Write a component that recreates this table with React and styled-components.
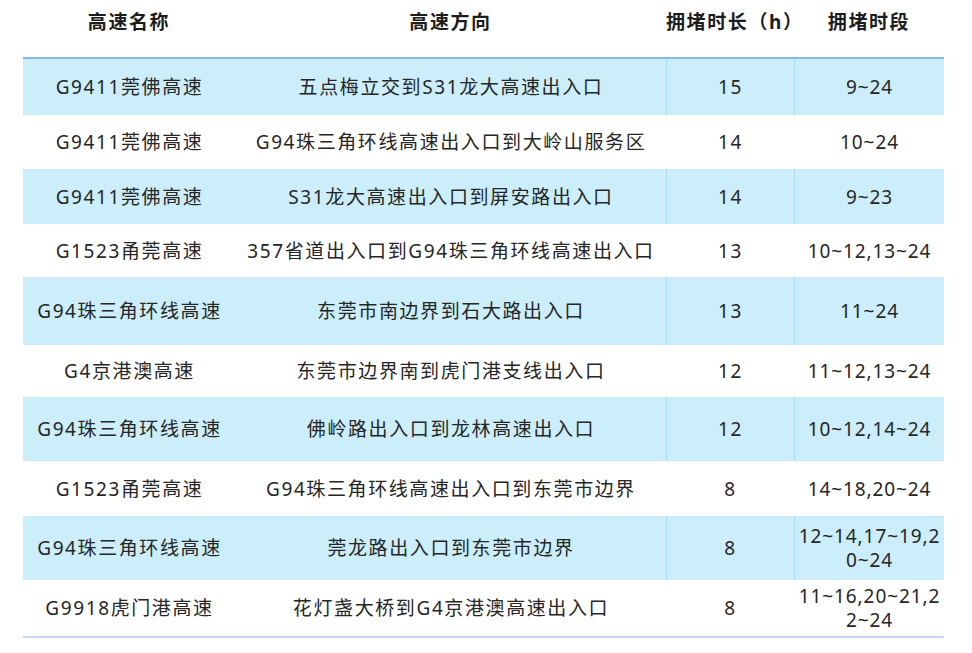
import styled, { createGlobalStyle } from 'styled-components'

const GlobalStyle = createGlobalStyle`
  body {
    margin: 0;
    background: #ffffff;
    font-family: "Noto Sans", "Noto Sans CJK SC", sans-serif;
  }
`

const Page = styled.div`
  width: 972px;
  height: 653px;
  padding-left: 23px;
  box-sizing: border-box;
  overflow: hidden;
`

const Table = styled.table`
  width: 921px;
  border-collapse: separate;
  border-spacing: 0;
  table-layout: fixed;
  border-bottom: 2px solid #c3dbf1;
`

const HeadCell = styled.th`
  box-sizing: border-box;
  height: 59px;
  padding: 8px 0 0;
  vertical-align: top;
  font-size: 19px;
  font-weight: 700;
  letter-spacing: 1.6px;
  line-height: 28px;
  color: #1c1c1c;
  text-align: center;
  white-space: nowrap;
  border-bottom: 2px solid #86bbe9;
`

const Row = styled.tr`
  height: ${(p) => p.$h}px;
  background: ${(p) => (p.$striped ? '#cbeefa' : '#ffffff')};
`

const Cell = styled.td`
  box-sizing: border-box;
  padding: 0;
  font-size: 19px;
  letter-spacing: ${(p) => (p.$tight ? '0.9px' : '1.6px')};
  line-height: 24px;
  color: #262626;
  text-align: center;
  vertical-align: middle;
  word-break: break-all;
  overflow-wrap: anywhere;
  border-left: 1px solid
    ${(p) => (p.$divided && p.$striped ? '#a6e0f6' : 'transparent')};
`

const rows = [
  ['G9411莞佛高速', '五点梅立交到S31龙大高速出入口', '15', '9~24', 56],
  ['G9411莞佛高速', 'G94珠三角环线高速出入口到大岭山服务区', '14', '10~24', 54],
  ['G9411莞佛高速', 'S31龙大高速出入口到屏安路出入口', '14', '9~23', 55],
  ['G1523甬莞高速', '357省道出入口到G94珠三角环线高速出入口', '13', '10~12,13~24', 53],
  ['G94珠三角环线高速', '东莞市南边界到石大路出入口', '13', '11~24', 68],
  ['G4京港澳高速', '东莞市边界南到虎门港支线出入口', '12', '11~12,13~24', 52],
  ['G94珠三角环线高速', '佛岭路出入口到龙林高速出入口', '12', '10~12,14~24', 64],
  ['G1523甬莞高速', 'G94珠三角环线高速出入口到东莞市边界', '8', '14~18,20~24', 55],
  ['G94珠三角环线高速', '莞龙路出入口到东莞市边界', '8', '12~14,17~19,20~24', 64],
  ['G9918虎门港高速', '花灯盏大桥到G4京港澳高速出入口', '8', '11~16,20~21,22~24', 56],
]

export default function App() {
  return (
    <Page>
      <GlobalStyle />
      <Table>
        <colgroup>
          <col style={{ width: 212 }} />
          <col style={{ width: 431 }} />
          <col style={{ width: 128 }} />
          <col style={{ width: 150 }} />
        </colgroup>
        <thead>
          <tr>
            <HeadCell>高速名称</HeadCell>
            <HeadCell>高速方向</HeadCell>
            <HeadCell>拥堵时长（h）</HeadCell>
            <HeadCell>拥堵时段</HeadCell>
          </tr>
        </thead>
        <tbody>
          {rows.map(([name, dir, hours, period, h], i) => {
            const striped = i % 2 === 0
            return (
              <Row key={i} $h={h} $striped={striped}>
                <Cell>{name}</Cell>
                <Cell>{dir}</Cell>
                <Cell $divided $striped={striped}>{hours}</Cell>
                <Cell $divided $tight $striped={striped}>{period}</Cell>
              </Row>
            )
          })}
        </tbody>
      </Table>
    </Page>
  )
}
